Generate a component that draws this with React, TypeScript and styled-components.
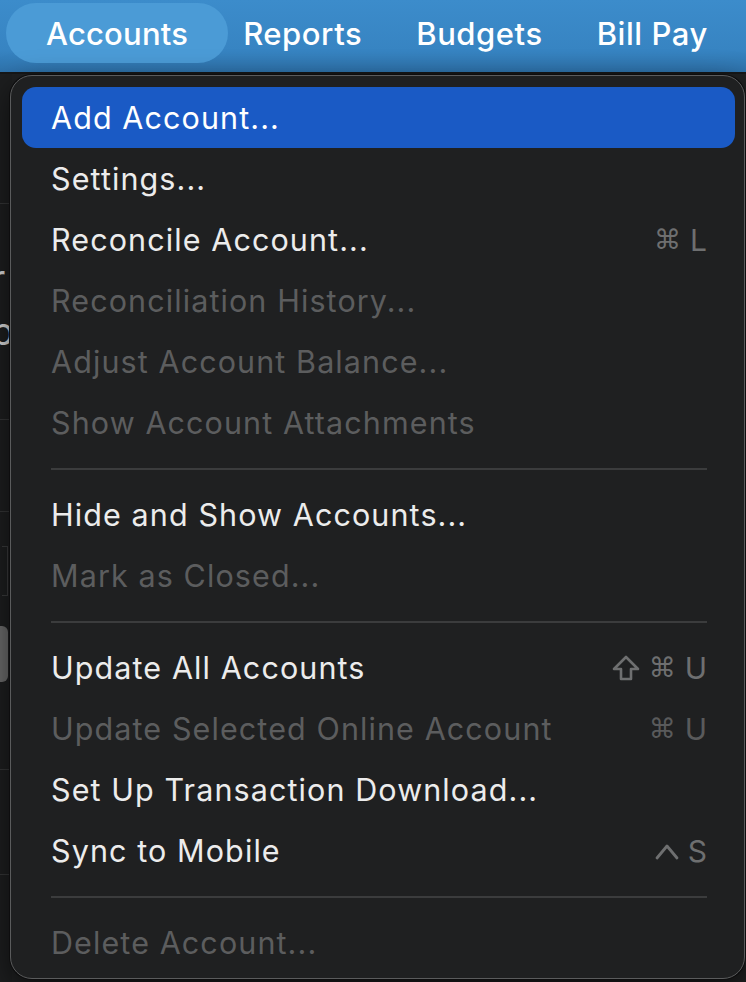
import React from "react";
import styled, { createGlobalStyle } from "styled-components";

const GlobalStyle = createGlobalStyle`
  html, body { margin: 0; padding: 0; background: #1f2021; }
  body { font-family: Inter, "Noto Sans", "DejaVu Sans", sans-serif; -webkit-font-smoothing: antialiased; }
  * { box-sizing: border-box; }
`;

const Page = styled.div`
  position: relative;
  width: 746px;
  height: 982px;
  overflow: hidden;
  background: #1f2021;
`;

const TopBar = styled.div`
  height: 74px;
  display: flex;
  align-items: flex-start;
  padding: 3px 0 0 6px;
  background: linear-gradient(180deg, #3c8ccb 0%, #3784c2 70%, #2e72ab 100%);
  border-bottom: 2px solid #161718;
`;

const Tab = styled.div<{ $active?: boolean }>`
  height: 60px;
  display: flex;
  align-items: center;
  padding: 0 ${(p) => (p.$active ? "40px" : "27px")};
  margin-right: ${(p) => (p.$active ? "-12px" : "0")};
  border-radius: 30px;
  background: ${(p) => (p.$active ? "#4b9bd6" : "transparent")};
  color: #ffffff;
  font-size: 31px;
  font-weight: 500;
  letter-spacing: ${(p) => (p.$active ? "0.2px" : "0.55px")};
  white-space: nowrap;
`;

const Body = styled.div`
  display: flex;
  height: 908px;
`;

const LeftStrip = styled.div`
  width: 12px;
  display: flex;
  flex-direction: column;
  background: #1d1e1f;
  color: #d8d8d8;
  overflow: hidden;
`;

const StripLine = styled.div<{ $h: number }>`
  height: ${(p) => p.$h}px;
  border-bottom: 1px solid #343536;
  flex-shrink: 0;
`;

const StripSpace = styled.div<{ $h: number }>`
  height: ${(p) => p.$h}px;
  flex-shrink: 0;
`;

const StripGlyph = styled.div<{ $h: number }>`
  height: ${(p) => p.$h}px;
  line-height: ${(p) => p.$h}px;
  font-size: 38px;
  margin-left: -9px;
  flex-shrink: 0;
`;

const StripBox = styled.div`
  height: 50px;
  width: 6px;
  margin: 0 0 0 2px;
  border: 1px solid #3a3b3c;
  border-left: none;
  flex-shrink: 0;
`;

const StripBlock = styled.div`
  height: 56px;
  width: 8px;
  border-radius: 0 6px 6px 0;
  background: #6a6a6a;
  flex-shrink: 0;
`;

const Menu = styled.div`
  position: absolute;
  left: 10px;
  top: 75px;
  width: 735px;
  height: 904px;
  padding: 11px 9px 8px 11px;
  border-radius: 22px;
  background: #1f2021;
  border: 1.5px solid #5a5b5c;
  box-shadow: 0 0 0 1px #0d0d0e, 0 10px 30px rgba(0, 0, 0, 0.6);
  display: flex;
  flex-direction: column;
`;

const Item = styled.div<{ $highlight?: boolean; $disabled?: boolean }>`
  height: 61px;
  flex-shrink: 0;
  display: flex;
  align-items: center;
  justify-content: space-between;
  padding: 0 28px 0 29px;
  border-radius: 14px;
  background: ${(p) => (p.$highlight ? "#1a5ac5" : "transparent")};
  color: ${(p) => (p.$disabled ? "#5c5d5e" : p.$highlight ? "#ffffff" : "#ececec")};
  font-size: 30.5px;
  font-weight: 400;
  letter-spacing: 1.1px;
  white-space: nowrap;
`;

const Shortcut = styled.span<{ $dim?: boolean }>`
  color: ${(p) => (p.$dim ? "#595a5b" : "#6e6f70")};
  font-size: 30px;
  letter-spacing: 0;
  display: flex;
  align-items: center;
  gap: 9px;
`;

const Sym = styled.span`
  font-family: "DejaVu Sans", sans-serif;
  font-size: 27px;
  line-height: 1;
`;

const KeyIcon = styled.svg`
  display: block;
  flex-shrink: 0;
`;

const Separator = styled.div`
  height: 31px;
  flex-shrink: 0;
  display: flex;
  align-items: center;
  padding: 0 28px 0 29px;
  &::after {
    content: "";
    flex: 1;
    height: 2px;
    background: #3b3c3d;
  }
`;

const ShiftIcon = () => (
  <KeyIcon width="28" height="26" viewBox="0 0 28 26" fill="none">
    <path
      d="M14 2 L26 14 H19 V24 H9 V14 H2 Z"
      stroke="currentColor"
      strokeWidth="2.6"
      strokeLinejoin="round"
    />
  </KeyIcon>
);

const CaretIcon = () => (
  <KeyIcon width="24" height="20" viewBox="0 0 24 20" fill="none">
    <path
      d="M2 17 L12 5 L22 17"
      stroke="currentColor"
      strokeWidth="2.8"
      strokeLinecap="round"
      strokeLinejoin="round"
    />
  </KeyIcon>
);

type KeyName = "cmd" | "shift" | "ctrl";

type Entry =
  | { sep: true }
  | { label: string; disabled?: boolean; highlight?: boolean; keys?: KeyName[]; letter?: string };

const entries: Entry[] = [
  { label: "Add Account...", highlight: true },
  { label: "Settings..." },
  { label: "Reconcile Account...", keys: ["cmd"], letter: "L" },
  { label: "Reconciliation History...", disabled: true },
  { label: "Adjust Account Balance...", disabled: true },
  { label: "Show Account Attachments", disabled: true },
  { sep: true },
  { label: "Hide and Show Accounts..." },
  { label: "Mark as Closed...", disabled: true },
  { sep: true },
  { label: "Update All Accounts", keys: ["shift", "cmd"], letter: "U" },
  { label: "Update Selected Online Account", disabled: true, keys: ["cmd"], letter: "U" },
  { label: "Set Up Transaction Download..." },
  { label: "Sync to Mobile", keys: ["ctrl"], letter: "S" },
  { sep: true },
  { label: "Delete Account...", disabled: true },
];

const renderKey = (k: KeyName, j: number) => {
  if (k === "shift") return <ShiftIcon key={j} />;
  if (k === "ctrl") return <CaretIcon key={j} />;
  return <Sym key={j}>⌘</Sym>;
};

export default function App() {
  return (
    <>
      <GlobalStyle />
      <Page>
        <TopBar>
          <Tab $active>Accounts</Tab>
          <Tab>Reports</Tab>
          <Tab>Budgets</Tab>
          <Tab>Bill Pay</Tab>
        </TopBar>
        <Body>
          <LeftStrip>
            <StripLine $h={130} />
            <StripSpace $h={46} />
            <StripGlyph $h={56}>r</StripGlyph>
            <StripGlyph $h={50}>p</StripGlyph>
            <StripLine $h={64} />
            <StripLine $h={92} />
            <StripSpace $h={34} />
            <StripBox />
            <StripSpace $h={30} />
            <StripBlock />
            <StripLine $h={88} />
            <StripLine $h={105} />
          </LeftStrip>
        </Body>
        <Menu>
          {entries.map((e, i) =>
            "sep" in e ? (
              <Separator key={i} />
            ) : (
              <Item key={i} $highlight={e.highlight} $disabled={e.disabled}>
                <span>{e.label}</span>
                {e.letter && (
                  <Shortcut $dim={e.disabled}>
                    {e.keys?.map(renderKey)}
                    <span>{e.letter}</span>
                  </Shortcut>
                )}
              </Item>
            )
          )}
        </Menu>
      </Page>
    </>
  );
}
